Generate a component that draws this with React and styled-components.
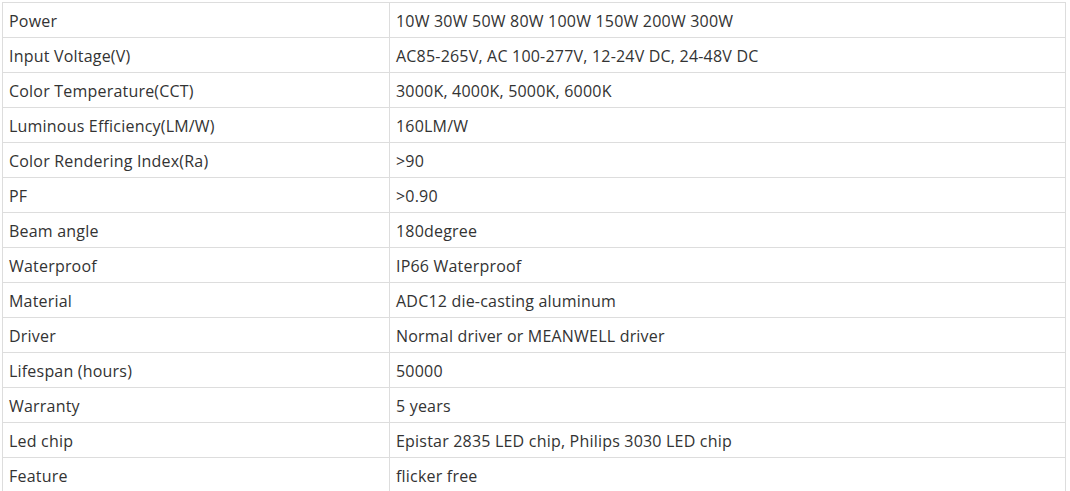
import React from "react";
import styled, { createGlobalStyle } from "styled-components";

const specs = [
  ["Power", "10W 30W 50W 80W 100W 150W 200W 300W"],
  ["Input Voltage(V)", "AC85-265V, AC 100-277V, 12-24V DC, 24-48V DC"],
  ["Color Temperature(CCT)", "3000K, 4000K, 5000K, 6000K"],
  ["Luminous Efficiency(LM/W)", "160LM/W"],
  ["Color Rendering Index(Ra)", ">90"],
  ["PF", ">0.90"],
  ["Beam angle", "180degree"],
  ["Waterproof", "IP66 Waterproof"],
  ["Material", "ADC12 die-casting aluminum"],
  ["Driver", "Normal driver or MEANWELL driver"],
  ["Lifespan (hours)", "50000"],
  ["Warranty", "5 years"],
  ["Led chip", "Epistar 2835 LED chip, Philips 3030 LED chip"],
  ["Feature", "flicker free"],
];

export default function App() {
  return (
    <>
      <GlobalStyle />
      <Wrap>
        <SpecTable>
          <colgroup>
            <col style={{ width: 387 }} />
            <col />
          </colgroup>
          <tbody>
            {specs.map(([name, value]) => (
              <Row key={name}>
                <Cell>{name}</Cell>
                <Cell>{value}</Cell>
              </Row>
            ))}
          </tbody>
        </SpecTable>
      </Wrap>
    </>
  );
}

const GlobalStyle = createGlobalStyle`
  body {
    margin: 0;
    background: #fff;
    font-family: "Open Sans", "Noto Sans", sans-serif;
    color: #333;
  }
`;

const Wrap = styled.div`
  padding: 2px 0 0 2px;
  width: 1064px;
`;

const SpecTable = styled.table`
  width: 1064px;
  border-collapse: collapse;
  table-layout: fixed;
`;

const Row = styled.tr`
  height: 35px;
`;

const Cell = styled.td`
  border: 1px solid #ddd;
  padding: 2px 6px 0;
  font-size: 16px;
  line-height: 20px;
  letter-spacing: 0.2px;
  color: #333;
  white-space: nowrap;
  vertical-align: middle;
`;
